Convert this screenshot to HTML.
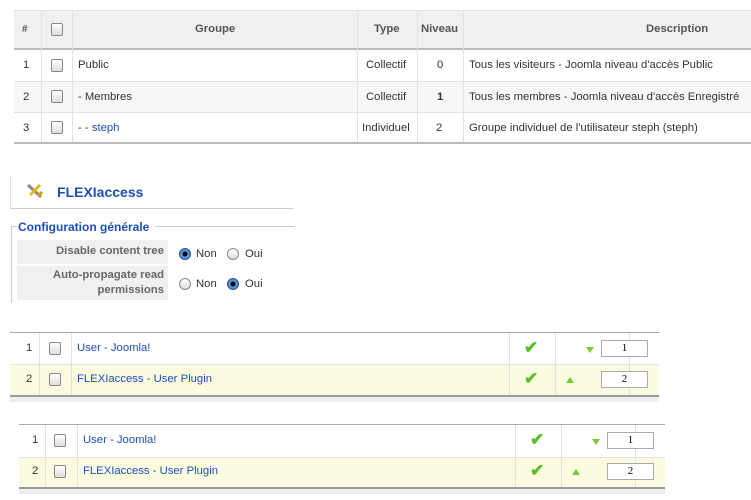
<!DOCTYPE html>
<html><head><meta charset="utf-8"><style>
*{margin:0;padding:0;box-sizing:border-box}
body{width:751px;height:500px;background:#fff;font-family:"Liberation Sans",Arial,sans-serif;font-size:11.3px;color:#333;position:relative;overflow:hidden}
.a{position:absolute}
.cb{position:absolute;width:12px;height:13px;border:1px solid #888;border-radius:2px;background:linear-gradient(#fff,#ddd)}
.t{position:absolute;white-space:nowrap}
.vl{position:absolute;width:1px;background:#e2e2e2}
.hl{position:absolute;height:1px;background:#e2e2e2}
a,.lk{color:#1c4fb8}
.rad{position:absolute;width:12px;height:12px;border-radius:50%;border:1px solid #888;background:linear-gradient(#fff,#ddd)}
.rad.on{border-color:#2a5a9a;background:radial-gradient(circle,#000 0 2px,#6aa0e0 3px,#2f6fc0 6px)}
.inp{position:absolute;width:47px;height:17px;border:1px solid #aaa;background:#fff;text-align:center;font-size:11px;line-height:15px;color:#000;font-family:"Liberation Serif",serif}
.chk{position:absolute;color:#5cbf2a;font-size:17px;font-weight:bold;line-height:1}
.tri{position:absolute;width:0;height:0;border-left:4px solid transparent;border-right:4px solid transparent}
</style></head><body>
<div class="a" style="left:14px;top:10px;width:737px;height:39px;background:#f0f0f0;border-top:1px solid #e4e4e4"></div>
<div class="a" style="left:14px;top:81px;width:737px;height:32px;background:#f7f7f7"></div>
<div class="a" style="left:14px;top:48px;width:737px;height:2px;background:#bbb"></div>
<div class="hl" style="left:14px;top:81px;width:737px"></div>
<div class="hl" style="left:14px;top:112px;width:737px"></div>
<div class="a" style="left:14px;top:142px;width:737px;height:2px;background:#bbb"></div>
<div class="vl" style="left:41px;top:10px;height:132px"></div>
<div class="vl" style="left:72px;top:10px;height:132px"></div>
<div class="vl" style="left:357px;top:10px;height:132px"></div>
<div class="vl" style="left:417px;top:10px;height:132px"></div>
<div class="vl" style="left:463px;top:10px;height:132px"></div>
<div class="t" style="left:22px;top:24px;font-weight:bold;font-size:10px;color:#555">#</div>
<div class="cb" style="left:51px;top:23px"></div>
<div class="t" style="left:195px;top:23px;font-weight:bold;color:#555">Groupe</div>
<div class="t" style="left:374px;top:23px;font-weight:bold;color:#555">Type</div>
<div class="t" style="left:421px;top:23px;font-weight:bold;color:#555">Niveau</div>
<div class="t" style="left:646px;top:23px;font-weight:bold;color:#555">Description</div>
<div class="t" style="left:23px;top:59px">1</div><div class="cb" style="left:51px;top:59px"></div>
<div class="t" style="left:78px;top:59px">Public</div><div class="t" style="left:366px;top:59px">Collectif</div>
<div class="t" style="left:437px;top:59px">0</div><div class="t" style="left:469px;top:59px">Tous les visiteurs - Joomla niveau d'accès Public</div>
<div class="t" style="left:23px;top:91px">2</div><div class="cb" style="left:51px;top:90px"></div>
<div class="t" style="left:78px;top:91px">- Membres</div><div class="t" style="left:366px;top:91px">Collectif</div>
<div class="t" style="left:437px;top:91px;font-weight:bold">1</div><div class="t" style="left:469px;top:91px">Tous les membres - Joomla niveau d'accès Enregistré</div>
<div class="t" style="left:23px;top:122px">3</div><div class="cb" style="left:51px;top:121px"></div>
<div class="t" style="left:78px;top:122px">- - <span class="lk">steph</span></div><div class="t" style="left:362px;top:122px">Individuel</div>
<div class="t" style="left:436px;top:122px">2</div><div class="t" style="left:469px;top:122px">Groupe individuel de l'utilisateur steph (steph)</div>

<div class="vl" style="left:10px;top:175px;height:33px"></div>
<div class="hl" style="left:10px;top:208px;width:283px;background:#ccc"></div>
<svg class="a" style="left:26px;top:183px" width="18" height="16" viewBox="0 0 18 16"><path d="M2 2 L15 14" stroke="#888" stroke-width="3"/><path d="M14 2 L4 12" stroke="#e8b81a" stroke-width="3"/><path d="M12 13 L16 9" stroke="#d9a000" stroke-width="3"/></svg>
<div class="t" style="left:57px;top:184px;font-weight:bold;font-size:14px;color:#1c4fb8">FLEXIaccess</div>
<div class="a" style="left:11px;top:226px;width:6px;height:1px;background:#ccc"></div>
<div class="a" style="left:11px;top:226px;width:1px;height:77px;background:#ccc"></div>
<div class="a" style="left:155px;top:226px;width:140px;height:1px;background:#ccc"></div>
<div class="t" style="left:18px;top:220px;font-weight:bold;font-size:12px;color:#1c4fb8">Configuration générale</div>
<div class="a" style="left:17px;top:240px;width:151px;height:24px;background:#f0f0f0"></div>
<div class="a" style="left:17px;top:266px;width:151px;height:34px;background:#f0f0f0"></div>
<div class="t" style="left:17px;top:245px;width:147px;text-align:right;font-weight:bold;color:#666">Disable content tree</div>
<div class="t" style="left:17px;top:268px;width:147px;text-align:right;font-weight:bold;color:#666;line-height:15px;white-space:normal">Auto-propagate read<br>permissions</div>
<div class="rad on" style="left:179px;top:248px"></div><div class="t" style="left:196px;top:248px">Non</div>
<div class="rad" style="left:227px;top:248px"></div><div class="t" style="left:245px;top:248px">Oui</div>
<div class="rad" style="left:179px;top:278px"></div><div class="t" style="left:196px;top:278px">Non</div>
<div class="rad on" style="left:227px;top:278px"></div><div class="t" style="left:245px;top:278px">Oui</div>

<div class="a" style="left:10px;top:332px;width:649px;height:1px;background:#aaa"></div>
<div class="a" style="left:10px;top:364px;width:649px;height:31px;background:#fbfbe0"></div>
<div class="hl" style="left:10px;top:364px;width:649px"></div>
<div class="a" style="left:10px;top:395px;width:649px;height:2px;background:#999"></div>
<div class="a" style="left:10px;top:397px;width:649px;height:5px;background:#eee"></div>
<div class="vl" style="left:39px;top:333px;height:62px"></div>
<div class="vl" style="left:71px;top:333px;height:62px"></div>
<div class="vl" style="left:509px;top:333px;height:62px"></div>
<div class="vl" style="left:555px;top:333px;height:62px"></div>
<div class="vl" style="left:629px;top:333px;height:62px"></div>
<div class="t" style="left:26px;top:342px">1</div><div class="cb" style="left:49px;top:342px"></div>
<div class="t lk" style="left:77px;top:342px">User - Joomla!</div>
<div class="chk" style="left:524px;top:339px">✔</div>
<div class="tri" style="left:586px;top:347px;border-top:6px solid #7c3"></div>
<div class="inp" style="left:601px;top:340px">1</div>
<div class="t" style="left:26px;top:373px">2</div><div class="cb" style="left:49px;top:373px"></div>
<div class="t lk" style="left:77px;top:373px">FLEXIaccess - User Plugin</div>
<div class="chk" style="left:524px;top:370px">✔</div>
<div class="tri" style="left:566px;top:377px;border-bottom:6px solid #7c3"></div>
<div class="inp" style="left:601px;top:371px">2</div>

<div class="a" style="left:19px;top:424px;width:646px;height:1px;background:#aaa"></div>
<div class="a" style="left:19px;top:457px;width:646px;height:30px;background:#fbfbe0"></div>
<div class="hl" style="left:19px;top:457px;width:646px"></div>
<div class="a" style="left:19px;top:487px;width:646px;height:2px;background:#999"></div>
<div class="a" style="left:19px;top:489px;width:646px;height:5px;background:#eee"></div>
<div class="vl" style="left:45px;top:425px;height:62px"></div>
<div class="vl" style="left:77px;top:425px;height:62px"></div>
<div class="vl" style="left:515px;top:425px;height:62px"></div>
<div class="vl" style="left:561px;top:425px;height:62px"></div>
<div class="vl" style="left:635px;top:425px;height:62px"></div>
<div class="t" style="left:32px;top:434px">1</div><div class="cb" style="left:54px;top:434px"></div>
<div class="t lk" style="left:83px;top:434px">User - Joomla!</div>
<div class="chk" style="left:530px;top:431px">✔</div>
<div class="tri" style="left:592px;top:439px;border-top:6px solid #7c3"></div>
<div class="inp" style="left:607px;top:432px">1</div>
<div class="t" style="left:32px;top:465px">2</div><div class="cb" style="left:54px;top:465px"></div>
<div class="t lk" style="left:83px;top:465px">FLEXIaccess - User Plugin</div>
<div class="chk" style="left:530px;top:462px">✔</div>
<div class="tri" style="left:572px;top:469px;border-bottom:6px solid #7c3"></div>
<div class="inp" style="left:607px;top:463px">2</div>
</body></html>
